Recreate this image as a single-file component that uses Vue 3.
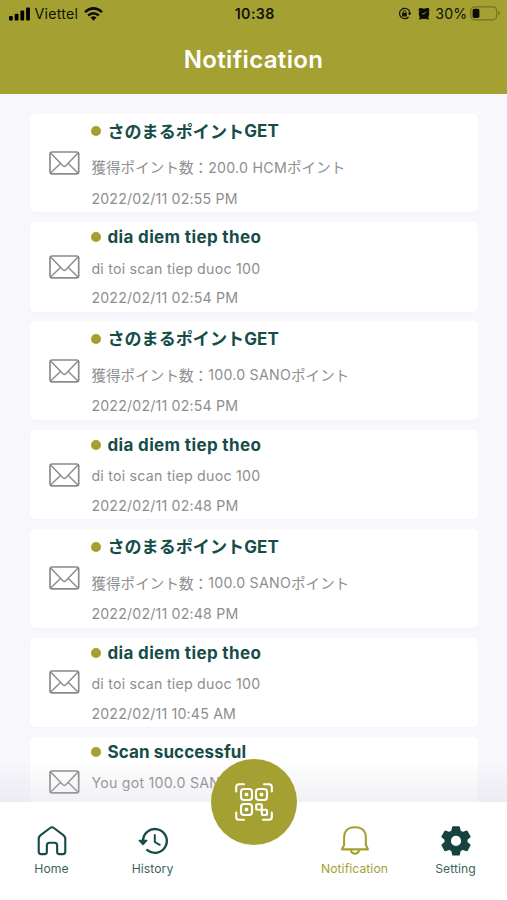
<script setup>
const point = 'さのまるポイント'
const items = [
  { title: point, latin: 'GET', body: '獲得ポイント数：', value: '200.0 HCM', tail: 'ポイント', date: '2022/02/11 02:55 PM', tall: true },
  { latin: 'dia diem tiep theo', value: 'di toi scan tiep duoc 100', date: '2022/02/11 02:54 PM' },
  { title: point, latin: 'GET', body: '獲得ポイント数：', value: '100.0 SANO', tail: 'ポイント', date: '2022/02/11 02:54 PM', tall: true },
  { latin: 'dia diem tiep theo', value: 'di toi scan tiep duoc 100', date: '2022/02/11 02:48 PM' },
  { title: point, latin: 'GET', body: '獲得ポイント数：', value: '100.0 SANO', tail: 'ポイント', date: '2022/02/11 02:48 PM', tall: true },
  { latin: 'dia diem tiep theo', value: 'di toi scan tiep duoc 100', date: '2022/02/11 10:45 AM' },
  { latin: 'Scan successful', value: 'You got 100.0 SANO' }
]
</script>

<template>
  <div class="screen">
    <header class="header">
      <div class="status">
        <div class="status-left">
          <svg class="signal" width="22" height="14" viewBox="0 0 22 14">
            <rect x="0" y="9" width="3.8" height="4.5" rx="1" />
            <rect x="5.7" y="6.8" width="3.8" height="6.7" rx="1" />
            <rect x="11.4" y="3.6" width="3.8" height="9.9" rx="1" />
            <rect x="17.1" y="0.6" width="3.8" height="12.9" rx="1" />
          </svg>
          <span class="carrier">Viettel</span>
          <svg width="19" height="14" viewBox="0 0 19 14" fill="none" stroke="#0c0c05" stroke-width="2.5">
            <path d="M1 5.1Q9.5-2.3 18 5.1" />
            <path d="M4.1 8.5Q9.5 3.9 14.9 8.5" />
            <path d="M6.5 10.5Q9.5 8.2 12.5 10.5L9.5 13.7Z" fill="#0c0c05" stroke="none" />
          </svg>
        </div>
        <span class="clock">10:38</span>
        <div class="status-right">
          <svg width="13" height="13" viewBox="0 0 13 13" fill="none" stroke="#15150a" stroke-width="1.2">
            <path d="M10.8 3.2A5.2 5.2 0 1 0 10.6 10" />
            <path d="M10.8 3.2Q12 5 11.7 7" />
            <path d="M9.7 6.1H13.3L11.5 8.5Z" fill="#15150a" stroke="none" />
            <rect x="4" y="5.7" width="4.8" height="3.7" rx=".5" fill="#15150a" stroke="none" />
            <path d="M5 6V4.8Q5 3.5 6.4 3.5T7.8 4.8V6" stroke-width=".9" />
          </svg>
          <svg class="alarm" width="12" height="13" viewBox="0 0 12 13">
            <circle cx="6" cy="6.7" r="5.3" fill="#0c0c05" />
            <path d="M.8 4.2Q-.2 1 3 .8L5.4 2ZM11.2 4.2Q12.2 1 9 .8L6.6 2ZM2 9.6L1 12.4H2.6L4.4 11.2ZM10 9.6L11 12.4H9.4L7.6 11.2Z" fill="#0c0c05" />
            <path d="M8 4.8L6.2 6.8H4" fill="none" stroke="#a4a132" stroke-width=".9" />
          </svg>
          <span class="percent">30%</span>
          <svg width="31" height="15" viewBox="0 0 31 15">
            <rect x=".8" y=".8" width="25.8" height="13" rx="3.8" fill="none" stroke="#75731f" stroke-width="1.2" />
            <rect x="2.6" y="2.7" width="6.8" height="9.2" rx="1.7" fill="#0c0c05" />
            <path d="M28.2 5.1Q30 5.8 30 7.3T28.2 9.5Z" fill="#75731f" />
          </svg>
        </div>
      </div>
      <h1 class="title">Notification</h1>
    </header>

    <main class="list">
      <article v-for="(item, i) in items" :key="i" class="card" :class="{ tall: item.tall }">
        <svg class="mail" width="31" height="24" viewBox="0 0 31 24" fill="none" stroke="#8b8b8b" stroke-width="1.4">
          <rect x="1" y="1" width="28.7" height="21.8" rx="2" stroke-width="1.7" />
          <path d="M1.7 2L13.9 14.8Q15.35 16.2 16.8 14.8L29 2M1.7 22L11.4 12.4M29 22L19.3 12.4" />
        </svg>
        <div class="content">
          <h2 class="heading"><i class="dot"></i><span v-if="item.title" class="jp-title">{{ item.title }}</span><span class="latin-title" :class="{ short: item.title, success: !item.date }">{{ item.latin }}</span></h2>
          <p class="body"><span v-if="item.body" class="jp">{{ item.body }}</span><span>{{ item.value }}</span><span v-if="item.tail" class="jp">{{ item.tail }}</span></p>
          <p v-if="item.date" class="date">{{ item.date }}</p>
        </div>
      </article>
      <div class="fade"></div>
    </main>

    <nav class="tabs">
      <a class="tab">
        <svg width="32" height="32" viewBox="-.5 -.5 33 33" fill="none" stroke="#174d49" stroke-width="2.2" stroke-linejoin="round">
          <path d="M2.3 14Q2.3 11.7 4 10.2L14 2.6Q16 1 18 2.6L28 10.2Q29.7 11.7 29.7 14V27Q29.7 29.5 27.2 29.5H23.5Q21.3 29.5 21.3 27V20.5Q21.3 17.8 18.6 17.8H13.4Q10.7 17.8 10.7 20.5V27Q10.7 29.5 8.5 29.5H4.8Q2.3 29.5 2.3 27Z" />
        </svg>
        <span>Home</span>
      </a>
      <a class="tab">
        <svg width="32" height="32" viewBox="0 0 32 32" fill="none" stroke="#174d49" stroke-width="2.4" stroke-linecap="round" stroke-linejoin="round">
          <path d="M6 16A11.9 11.9 0 1 1 10.3 25.1" />
          <path d="M2.3 15.4H9.8L6 19.4Z" fill="#174d49" stroke-width="1.4" />
          <path d="M17.8 10V17L22.7 19.8" stroke-width="2" />
        </svg>
        <span>History</span>
      </a>
      <div class="spacer"></div>
      <a class="tab active">
        <svg width="32" height="32" viewBox="0 0 32 32" fill="none" stroke="#a4a132" stroke-width="2.1" stroke-linejoin="round">
          <path d="M5.1 20V13.2Q5.1 2.3 16 2.3T26.9 13.2V20L29 24.4H3Z" />
          <path d="M11.7 24.8Q12.5 28.7 16 28.7T20.3 24.8" />
        </svg>
        <span>Notification</span>
      </a>
      <a class="tab">
        <svg width="32" height="32" viewBox="0 0 32 32">
          <path fill="#174240" stroke="#174240" stroke-width="1.6" stroke-linejoin="round" fill-rule="evenodd" d="M13 2H19L20 6.2L22.6 7.7L26.8 6.3L29.8 11.6L26.7 14.5V17.3L29.8 20.2L26.8 25.5L22.6 24.1L20 25.6L19 29.8H13L12 25.6L9.4 24.1L5.2 25.5L2.2 20.2L5.3 17.3V14.5L2.2 11.6L5.2 6.3L9.4 7.7L12 6.2ZM16 10A5.9 5.9 0 1 0 16 21.8A5.9 5.9 0 1 0 16 10Z" />
        </svg>
        <span>Setting</span>
      </a>
      <button class="scan" aria-label="Scan">
        <svg width="38" height="38" viewBox="0 0 38 38" fill="none" stroke="#fff" stroke-width="2.1" stroke-linecap="round" stroke-linejoin="round">
          <path d="M1.2 8.5V4Q1.2 1.2 4 1.2H9M29 1.2H34Q36.8 1.2 36.8 4V8.5M1.2 29.5V34Q1.2 36.8 4 36.8H9M28 36.8H34Q36.8 36.8 36.8 34V29.5" />
          <rect x="6" y="6" width="11" height="11" rx="3" />
          <rect x="21" y="6" width="11" height="11" rx="3" />
          <rect x="6" y="21" width="11" height="11" rx="3" />
          <rect x="21.2" y="21.2" width="5.6" height="5.6" rx="1" />
          <rect x="26.8" y="26.8" width="5.2" height="5.2" rx="1" />
          <path d="M10.5 10.5h2v2h-2zM25.5 10.5h2v2h-2zM10.5 25.5h2v2h-2z" fill="#fff" stroke-width="1.5" />
        </svg>
      </button>
    </nav>
  </div>
</template>

<style>
body { margin: 0; overflow: hidden; }
</style>

<style scoped>
.screen {
  width: 507px;
  height: 900px;
  display: flex;
  flex-direction: column;
  overflow: hidden;
  background: #f7f7fc;
  font-family: Inter, "Noto Sans CJK JP", sans-serif;
}
.header {
  height: 94px;
  flex: none;
  background: #a4a132;
}
.status {
  height: 27px;
  display: grid;
  grid-template-columns: 1fr auto 1fr;
  align-items: center;
  padding: 0 6px 0 8.5px;
  color: #111108;
  font-size: 14.2px;
}
.status-left, .status-right { display: flex; align-items: center; }
.status-right { justify-content: flex-end; }
.carrier { margin: 0 5.5px 0 4px; letter-spacing: .25px; }
.clock { font-weight: 600; letter-spacing: .45px; }
.alarm { margin: 0 5px 0 7px; }
.percent { margin-right: 2.5px; letter-spacing: .2px; }
.title {
  margin: 0;
  height: 65px;
  line-height: 65px;
  text-align: center;
  color: #fff;
  font-size: 24px;
  font-weight: 600;
  letter-spacing: .35px;
}
.list {
  position: relative;
  height: 708px;
  flex: none;
  box-sizing: border-box;
  padding: 19.8px 29px 0 30px;
  display: flex;
  flex-direction: column;
  gap: 9.9px;
  overflow: hidden;
}
.card {
  height: 89.4px;
  flex: none;
  display: flex;
  align-items: center;
  background: #fff;
  border-radius: 5px;
  box-shadow: 0 1px 3px rgba(40, 40, 90, .025);
}
.card.tall { height: 98.5px; }
.mail { margin: 0 11.4px 0 19px; flex: none; }
.content { align-self: flex-start; white-space: nowrap; }
.heading {
  margin: 0;
  height: 30.4px;
  display: flex;
  align-items: center;
  color: #174d49;
  font-size: 17px;
  font-weight: 650;
}
.dot {
  width: 10px;
  height: 10px;
  margin-right: 6px;
  border-radius: 50%;
  background: #a4a132;
}
.jp-title { padding-bottom: 2px; font-size: 17.1px; font-weight: 700; }
.latin-title { letter-spacing: .36px; }
.latin-title.short { letter-spacing: .1px; }
.latin-title.success { letter-spacing: .12px; }
.body, .date {
  margin: 0;
  display: flex;
  align-items: center;
  color: #8e8e8e;
  font-size: 14.2px;
  letter-spacing: .17px;
}
.body { height: 31.2px; letter-spacing: .24px; }
.jp { padding-bottom: 1px; font-size: 14.5px; letter-spacing: .1px; }
.date { height: 28px; }
.tall .heading { height: 35px; }
.tall .body { height: 37px; }
.tall .date { height: 25px; }
.fade {
  position: absolute;
  inset: auto 0 0;
  height: 42px;
  background: linear-gradient(rgba(205, 205, 220, 0), rgba(205, 205, 220, .28));
}
.tabs {
  position: relative;
  flex: 1;
  display: grid;
  grid-template-columns: repeat(5, 1fr);
  padding: 0 1px;
  background: #fff;
}
.tab {
  padding-top: 23px;
  display: flex;
  flex-direction: column;
  align-items: center;
  color: #3c6461;
  font-size: 12.2px;
}
.tab span { margin-top: 4px; line-height: 15px; letter-spacing: .07px; }
.tab.active { color: #a4a132; }
.scan {
  position: absolute;
  left: 50%;
  top: 0;
  width: 86px;
  height: 86px;
  padding: 0;
  border: 0;
  border-radius: 50%;
  display: grid;
  place-items: center;
  background: #a4a132;
  transform: translate(-50%, -50%);
}
</style>
